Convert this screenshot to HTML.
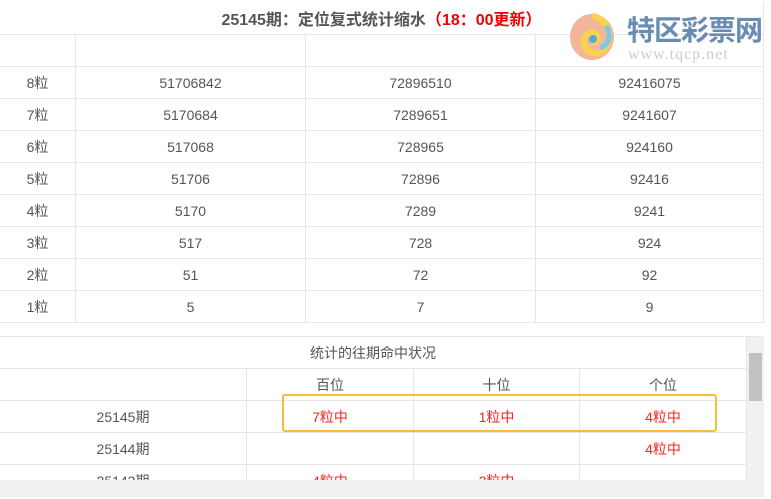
<!DOCTYPE html>
<html><head><meta charset="utf-8"><style>
body{margin:0;width:771px;height:499px;background:#fff;font-family:"Liberation Sans","Noto Sans CJK SC",sans-serif;color:#555;font-size:14px;position:relative;overflow:hidden}
table{border-collapse:collapse;position:absolute;left:0}
td{border:1px solid #e6e6e6;text-align:center;padding:0;height:31px}
#t1{top:2px;width:764px}
#t1 td:first-child{border-left:none}
.title{font-weight:bold;font-size:16px;color:#555;height:32px}
.red{color:#e00}
#p2{position:absolute;left:0;top:336px;width:764px;height:160px;overflow:hidden;border-top:1px solid #e6e6e6}
#t2{top:0;width:747px}
#t2 td{color:#555}
#t2 .r{color:#f22}
.vs{position:absolute;left:747px;top:0;width:17px;height:143px;background:#f1f1f1}
.hs{position:absolute;left:0;top:143px;width:764px;height:17px;background:#f1f1f1}
.thumb{position:absolute;left:749px;top:16px;width:13px;height:48px;background:#c1c1c1}
.hl{position:absolute;left:282px;top:394px;width:435px;height:38px;border:2px solid #f5bd3a;border-radius:3px;box-sizing:border-box}
</style></head><body>
<table id="t1">
<tr><td colspan="4" class="title" style="border-top:none">25145期：定位复式统计缩水<span class="red">（18：00更新）</span></td></tr>
<tr><td style="width:75px"></td><td style="width:229px"></td><td style="width:229px"></td><td></td></tr>
<tr><td>8粒</td><td>51706842</td><td>72896510</td><td>92416075</td></tr>
<tr><td>7粒</td><td>5170684</td><td>7289651</td><td>9241607</td></tr>
<tr><td>6粒</td><td>517068</td><td>728965</td><td>924160</td></tr>
<tr><td>5粒</td><td>51706</td><td>72896</td><td>92416</td></tr>
<tr><td>4粒</td><td>5170</td><td>7289</td><td>9241</td></tr>
<tr><td>3粒</td><td>517</td><td>728</td><td>924</td></tr>
<tr><td>2粒</td><td>51</td><td>72</td><td>92</td></tr>
<tr><td>1粒</td><td>5</td><td>7</td><td>9</td></tr>
</table>
<svg style="position:absolute;left:568px;top:12px" width="50" height="50" viewBox="0 0 50 50">
<ellipse cx="24" cy="25" rx="22" ry="23" fill="#f3b59a"/>
<path d="M24 4 C40 6 46 26 36 38 C30 44 18 42 16 32 C14 24 22 18 28 22 C32 26 28 32 24 30" fill="none" stroke="#f7d44a" stroke-width="6"/>
<path d="M38 14 C44 24 40 34 32 36" fill="none" stroke="#7fc7e8" stroke-width="5"/>
<circle cx="25" cy="27" r="4" fill="#5aa7d6"/>
</svg>
<div style="position:absolute;left:627px;top:14px;font-size:28px;font-weight:bold;color:#6a8cb4;letter-spacing:-1px;line-height:34px">特区彩票网</div>
<div style="position:absolute;left:628px;top:46px;font-size:16px;color:#ccc;font-family:'Liberation Serif',serif;letter-spacing:1px">www.tqcp.net</div>
<div id="p2">
<table id="t2">
<tr><td colspan="4" style="border-left:none;border-top:none">统计的往期命中状况</td></tr>
<tr><td style="width:246px;border-left:none"></td><td style="width:166px">百位</td><td style="width:165px">十位</td><td>个位</td></tr>
<tr><td style="border-left:none">25145期</td><td class="r">7粒中</td><td class="r">1粒中</td><td class="r">4粒中</td></tr>
<tr><td style="border-left:none">25144期</td><td></td><td></td><td class="r">4粒中</td></tr>
<tr><td style="border-left:none">25143期</td><td class="r">4粒中</td><td class="r">2粒中</td><td></td></tr>
</table>
<div class="vs"></div><div class="thumb"></div><div class="hs"></div>
</div>
<div class="hl"></div>
</body></html>
